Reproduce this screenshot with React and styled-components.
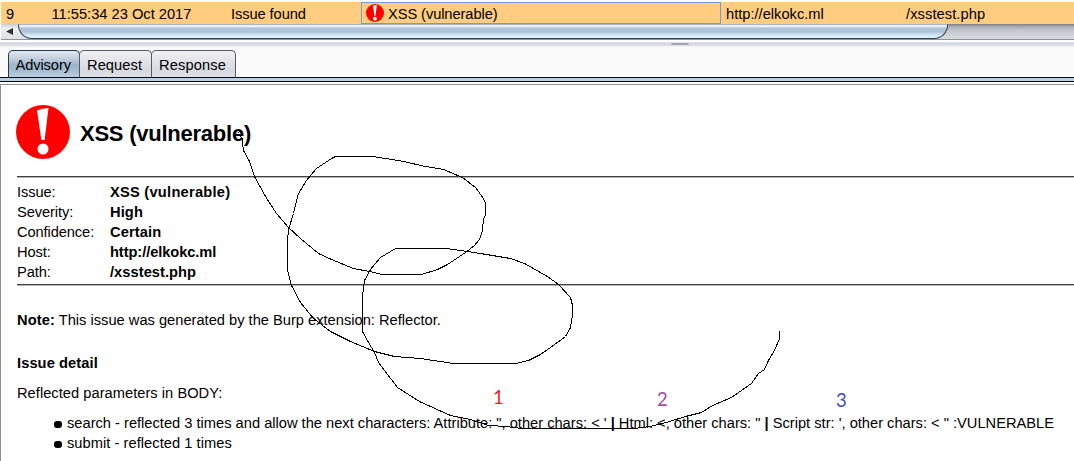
import React from "react";
import styled, { createGlobalStyle } from "styled-components";

const GlobalStyle = createGlobalStyle`
  * { box-sizing: border-box; }
  body {
    margin: 0;
    background: #fff;
    color: #000;
    font-family: "Liberation Sans", Arial, sans-serif;
    font-size: 14.67px;
    overflow: hidden;
  }
`;

const Window = styled.div`
  position: relative;
  width: 1074px;
  height: 461px;
  overflow: hidden;
  display: flex;
  flex-direction: column;
  white-space: pre;
`;

const IssueRow = styled.div`
  display: grid;
  grid-template-columns: 50px 179px 131px 360px 180px 1fr;
  flex: none;
  height: 22px;
  margin: 2px 0 0 1px;
  background: #ffcc80;
  line-height: 24px;
`;

const Cell = styled.div`
  height: 22px;
  padding-left: ${(p) => p.$pad ?? 0}px;
  letter-spacing: ${(p) => p.$track ?? 0}px;
`;

const SelectedCell = styled(Cell)`
  display: flex;
  gap: 4px;
  padding-left: 4px;
  border: 1px solid #6f9fd0;
  line-height: 22px;

  svg {
    margin-top: 1px;
  }
`;

const ScrollBar = styled.div`
  display: flex;
  flex: none;
  height: 16px;
  margin-left: 1px;
  background: linear-gradient(#7e8087, #adafb6 3px, #c6c8ce 7px, #d8dae0 14px);
  border-bottom: 1px solid #8e909e;
`;

const ScrollArrow = styled.div`
  display: flex;
  width: 32px;
  height: 15px;
  padding: 4px 0 0 5px;
  margin-right: -15px;
  background: linear-gradient(#c9cbd2, #eceef2 4px, #dfe1e7);
`;

const ScrollThumb = styled.div`
  width: 930px;
  height: 15px;
  border: 1px solid #2c4257;
  border-top: 1px solid #a9b6c6;
  border-radius: 0 0 14px 14px / 0 0 14px 14px;
  background: linear-gradient(#f0f4f9, #e3ebf3 2px, #adc1d7 3px, #b2c6da 7px, #d2e6f4 10px, #e2f8ff 13px);
`;

const Splitter = styled.div`
  display: flex;
  flex: none;
  height: 7px;
  padding: 3px 0 0 671px;
  background: linear-gradient(#fff 2px, #e6e7ec 2px, #d8dae2 3px, #d8dae2 5px, #ebecf0 6px, #f4f4f7 7px);
`;

const Grip = styled.div`
  width: 18px;
  height: 2px;
  border-radius: 2px 2px 0 0;
  background: #a0a6ac;
`;

const TabBar = styled.div`
  display: flex;
  flex: none;
  align-items: flex-end;
  height: 30px;
  padding-left: 8px;
  background: #fafafa;
`;

const Tab = styled.div`
  width: ${(p) => p.$width}px;
  height: 27px;
  margin-right: -1px;
  padding-left: ${(p) => (p.$active ? 6.5 : 7)}px;
  border: 1px solid ${(p) => (p.$active ? "#1d3750" : "#585b69")};
  border-bottom: 0;
  border-radius: 5px 5px 0 0;
  background: ${(p) =>
    p.$active
      ? "linear-gradient(#e2e9f0, #c5d2df 7px, #9eb5ca 14px, #a6bdd2 20px, #bbd0e2)"
      : "linear-gradient(#f0f0f3, #e3e4e9 10px, #d7d9e0 20px, #dfe0e6)"};
  letter-spacing: ${(p) => p.$track ?? 0}px;
  line-height: 28px;
`;

const TabUnderline = styled.div`
  flex: none;
  height: 5px;
  border-top: 1px solid #050a12;
  border-bottom: 1px solid #050a12;
  background: #b8cfe5;
`;

const Report = styled.div`
  flex: 1;
  margin-top: 2px;
  padding: 20px 0 0 16px;
  border-top: 1px solid #8e909e;
  border-left: 1px solid #8e909e;
`;

const Heading = styled.div`
  display: flex;
  align-items: center;
  gap: 10px;
  height: 54px;
  margin: 0 0 17px -1px;
`;

const Title = styled.h1`
  margin: 3px 0 0;
  font-size: 22px;
  font-weight: 700;
  line-height: 26px;
  letter-spacing: -0.24px;
`;

const Rule = styled.div`
  height: 2px;
  background: linear-gradient(#404040 50%, #b8b8b8 50%);
`;

const Facts = styled.div`
  display: grid;
  grid-template-columns: 93px 1fr;
  grid-auto-rows: 20px;
  line-height: 20px;
  padding: 4px 0 2px;
`;

const Line = styled.div`
  height: 20px;
  margin-top: ${(p) => p.$gap ?? 0}px;
  line-height: 20px;
  font-weight: ${(p) => (p.$bold ? 700 : 400)};
  letter-spacing: ${(p) => p.$track ?? 0}px;
`;

const Run = styled.span`
  font-weight: ${(p) => (p.$bold ? 700 : 400)};
  letter-spacing: ${(p) => p.$track ?? 0}px;
`;

const Bullets = styled.ul`
  margin: 10px 0 0;
  padding: 0 0 0 37px;
  list-style: none;
`;

const Bullet = styled.li`
  display: flex;
  align-items: center;
  gap: 5px;
  height: 20px;
  line-height: 20px;
  letter-spacing: ${(p) => p.$track ?? 0}px;

  &::before {
    content: "";
    width: 8px;
    height: 7px;
    margin-top: 3px;
    border-radius: 3px;
    background: #000;
  }
`;

const Scribble = styled.svg`
  position: absolute;
  inset: 0;
  pointer-events: none;
`;

const Mark = styled.div`
  position: absolute;
  left: ${(p) => p.$x}px;
  top: ${(p) => p.$y}px;
  color: ${(p) => p.$color};
  font: 18.5px/20px Lato, sans-serif;
`;

const AlertIcon = ({ size }) => (
  <svg width={size} height={size} viewBox="0 0 54 54">
    <circle cx="27" cy="27" r="27" fill="#f00" />
    <path d="M21 5.5Q26 3 32.5 3L28.6 35H25.4Z" fill="#fff" />
    <circle cx="27" cy="44" r="5.5" fill="#fff" />
  </svg>
);

const stroke =
  "238,133 239,130 241,133 240,136 242,138 242,143 243,150 249,161 254,176 265,196 276,213 288,227 300,238 318,253 331,259 353,268 369,271 382,274 421,274 437,269 447,264 465,252 474,245 479,239 482,230 483,218 485,215 485,203 483,198 475,187 462,177 443,169 438,168 425,166 403,161 385,158 372,156 335,156 331,158 316,168 306,180 298,193 293,213 288,229 287,240 287,270 291,285 300,302 313,318 330,331 350,341 374,351 394,356 420,358 453,363 515,363 528,360 540,354 550,347 565,336 570,327 572,314 572,305 570,297 558,284 547,276 524,263 510,258 480,253 467,251 446,248 395,248 380,257 370,269 364,280 362,295 362,331 368,342 374,352 378,362 384,370 397,387 419,401 450,415 470,419 488,425 506,426 521,428 634,428 650,426 669,421 685,416 701,412 712,405 731,397 751,383 758,373 764,369 768,360 774,350 779,338 779,330";

const facts = [
  ["Issue:", "XSS (vulnerable)", 0.24],
  ["Severity:", "High", 0.1],
  ["Confidence:", "Certain", 0.1],
  ["Host:", "http://elkokc.ml", -0.08],
  ["Path:", "/xsstest.php", 0.05],
];

export default function App() {
  return (
    <Window>
      <GlobalStyle />
      <IssueRow>
        <Cell $pad={5}>9</Cell>
        <Cell $pad={0.5}>11:55:34 23 Oct 2017</Cell>
        <Cell $pad={1} $track={-0.08}>Issue found</Cell>
        <SelectedCell $track={-0.08}>
          <AlertIcon size={18} />
          XSS (vulnerable)
        </SelectedCell>
        <Cell $pad={5}>http://elkokc.ml</Cell>
        <Cell $pad={5} $track={0.08}>/xsstest.php</Cell>
      </IssueRow>
      <ScrollBar>
        <ScrollArrow>
          <svg width="7" height="7" viewBox="0 0 7 7">
            <path d="M0 3.5L7 0V7Z" fill="#333" />
          </svg>
        </ScrollArrow>
        <ScrollThumb />
      </ScrollBar>
      <Splitter>
        <Grip />
      </Splitter>
      <TabBar>
        <Tab $active $width={72} $track={-0.1}>Advisory</Tab>
        <Tab $width={73} $track={0.06}>Request</Tab>
        <Tab $width={85} $track={0.12}>Response</Tab>
      </TabBar>
      <TabUnderline />
      <Report>
        <Heading>
          <AlertIcon size={54} />
          <Title>XSS (vulnerable)</Title>
        </Heading>
        <Rule />
        <Facts>
          {facts.map(([name, value, track]) => (
            <React.Fragment key={name}>
              <Run $track={-0.1}>{name}</Run>
              <Run $bold $track={track}>{value}</Run>
            </React.Fragment>
          ))}
        </Facts>
        <Rule />
        <Line $gap={24}>
          <Run $bold $track={0.1}>Note:</Run> This issue was generated by the Burp extension: Reflector.
        </Line>
        <Line $gap={23} $bold $track={0.08}>Issue detail</Line>
        <Line $gap={10} $track={0.03}>Reflected parameters in BODY:</Line>
        <Bullets>
          <Bullet>
            <span>
              search - reflected 3 times and allow the next characters: Attribute: ", other chars: {"<"} ' <Run $bold>|</Run> Html: {"<"}, other chars: " <Run $bold>|</Run> Script str: ', other chars: {"<"} " :VULNERABLE
            </span>
          </Bullet>
          <Bullet $track={0.04}>submit - reflected 1 times</Bullet>
        </Bullets>
      </Report>
      <Scribble width="1074" height="461" viewBox="0 0 1074 461">
        <polyline
          points={stroke}
          transform="translate(0.5 0.5)"
          fill="none"
          stroke="#000"
          strokeWidth="1"
          shapeRendering="crispEdges"
        />
      </Scribble>
      <Mark $x={493} $y={387} $color="#ed1c24">1</Mark>
      <Mark $x={657} $y={389} $color="#a349a4">2</Mark>
      <Mark $x={836} $y={390} $color="#3f48cc">3</Mark>
    </Window>
  );
}
